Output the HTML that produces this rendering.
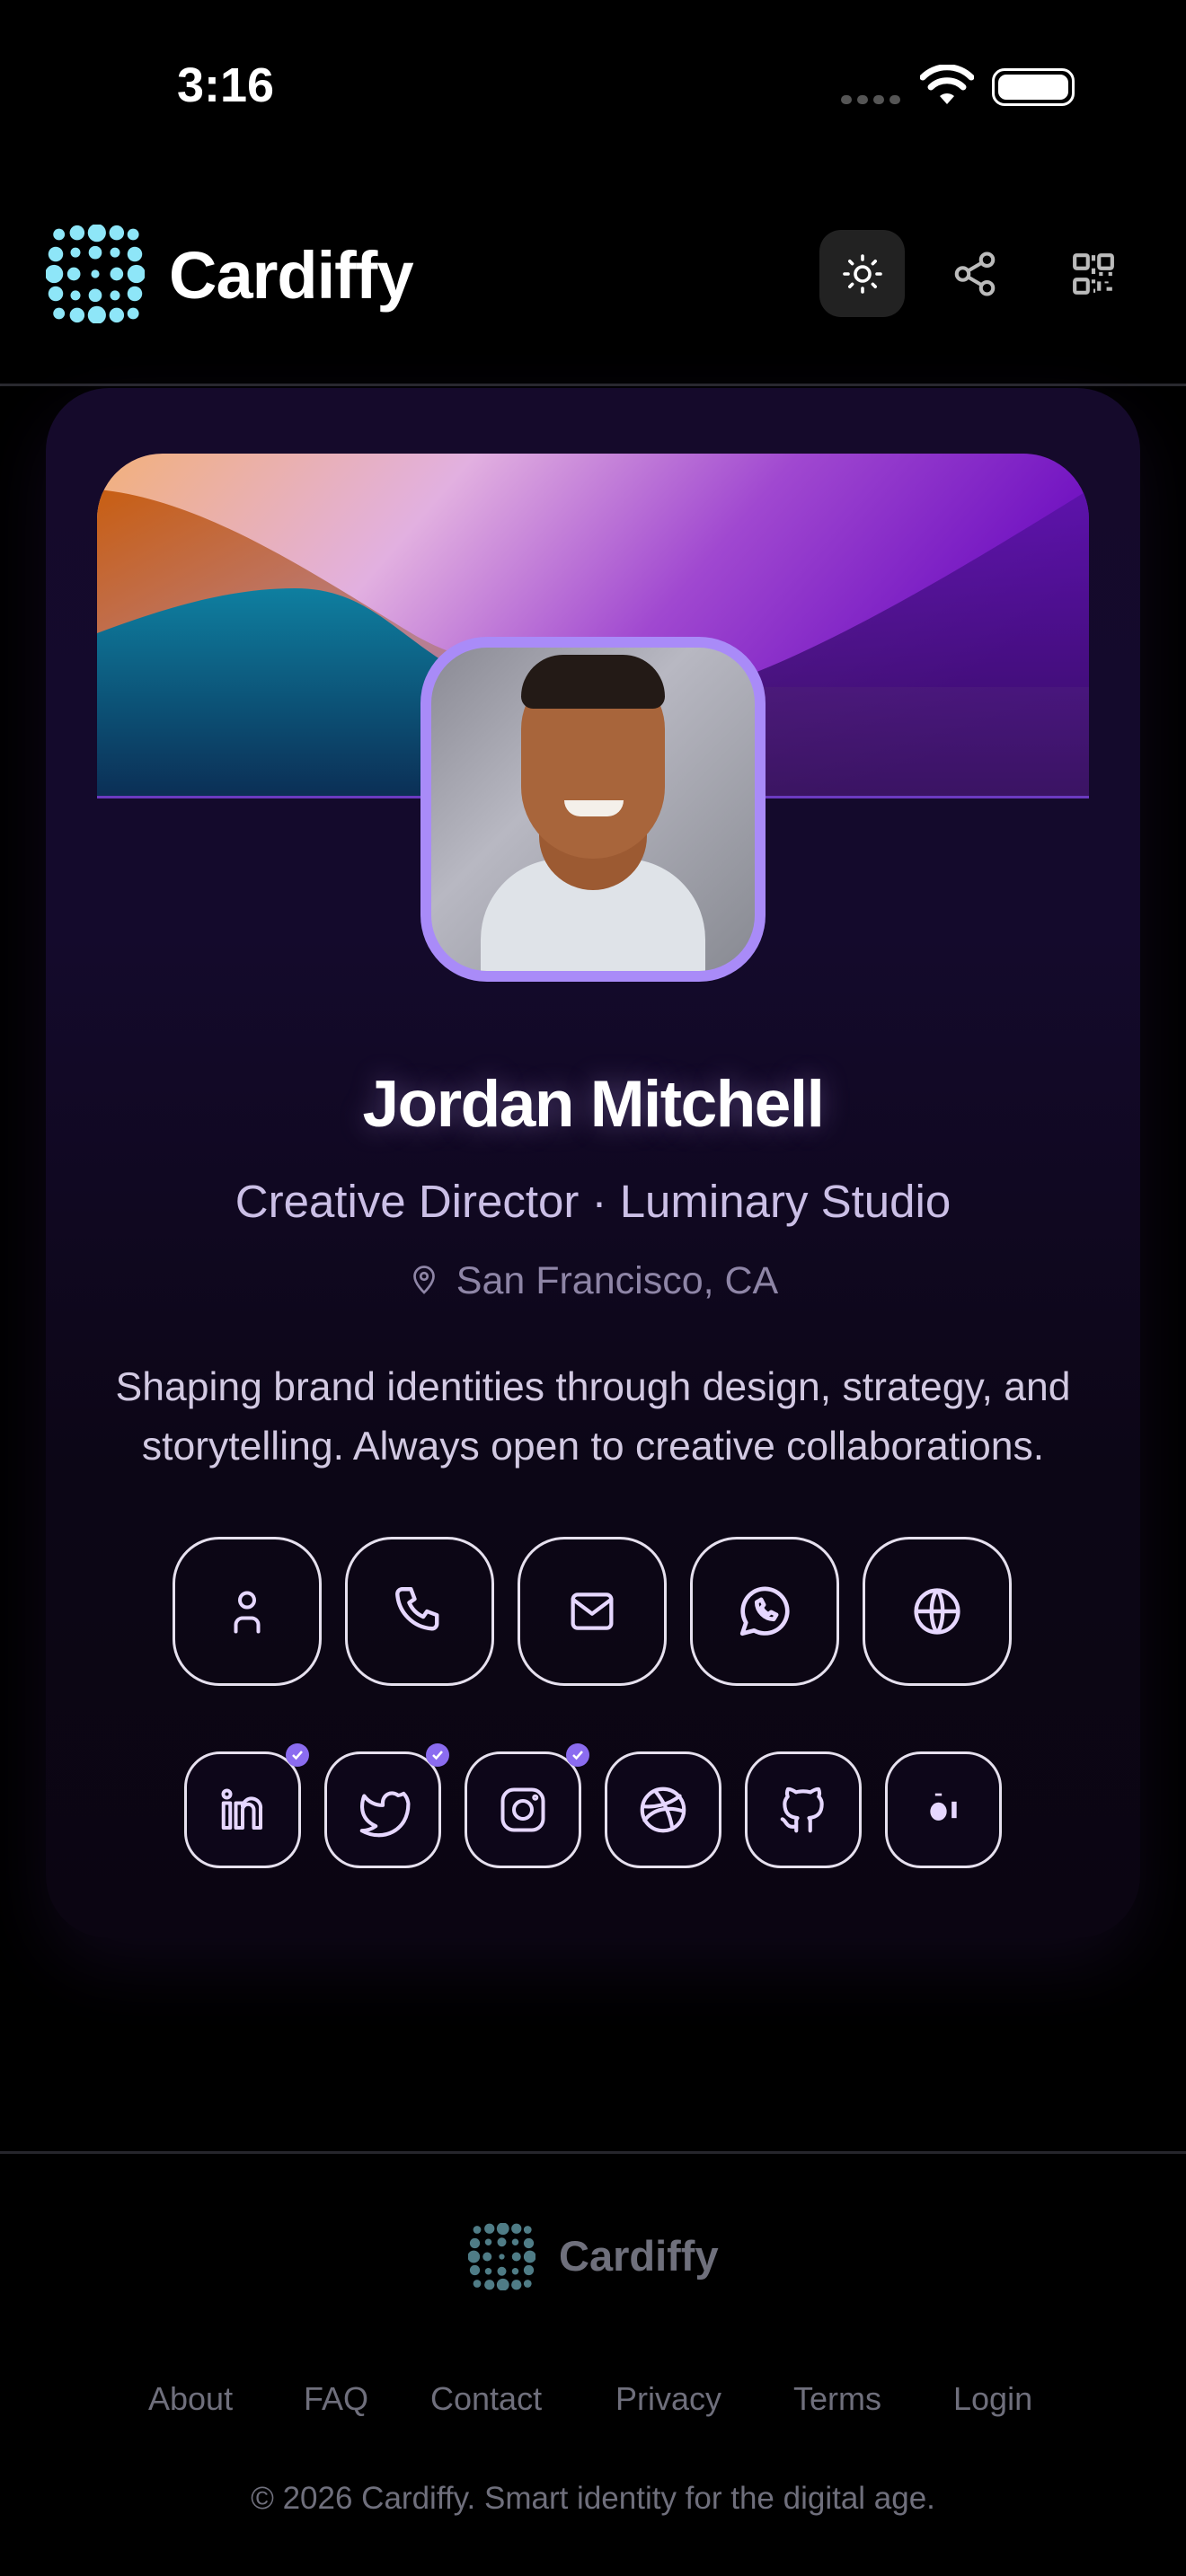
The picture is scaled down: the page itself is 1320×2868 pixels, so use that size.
<!DOCTYPE html>
<html><head><meta charset="utf-8">
<style>
*{margin:0;padding:0;box-sizing:border-box}
body{width:1320px;height:2868px;background:#000;font-family:"Liberation Sans",sans-serif;position:relative;overflow:hidden;color:#fff}
.a{position:absolute}
.ctr{left:0;width:1320px;text-align:center}
.btn{position:absolute;width:166px;height:166px;border:3px solid #e6e0ee;border-radius:52px;display:flex;align-items:center;justify-content:center}
.sb{position:absolute;width:130px;height:130px;border:3px solid #e6e0ee;border-radius:40px;display:flex;align-items:center;justify-content:center;background:#0d0619}
.chk{position:absolute;right:-12px;top:-12px;width:26px;height:26px;border-radius:50%;background:#8b6cf0;display:flex;align-items:center;justify-content:center}
.lk{position:absolute;top:2650px;font-size:36px;color:#6f6f7c}
</style></head><body>
<svg width="0" height="0" style="position:absolute"><defs>
<g id="logo">
<circle cx="8" cy="6" r="3.5"/><circle cx="19" cy="5" r="4.5"/><circle cx="31" cy="5" r="5.5"/><circle cx="43" cy="5" r="4.5"/><circle cx="53" cy="6" r="3.5"/>
<circle cx="6" cy="18" r="4.5"/><circle cx="18" cy="17" r="3"/><circle cx="30" cy="17" r="4"/><circle cx="42" cy="17" r="3"/><circle cx="54" cy="18" r="4.5"/>
<circle cx="5" cy="30" r="5.5"/><circle cx="17" cy="30" r="4"/><circle cx="30" cy="30" r="2.5"/><circle cx="43" cy="30" r="4"/><circle cx="55" cy="30" r="5.5"/>
<circle cx="6" cy="42" r="4.5"/><circle cx="18" cy="43" r="3"/><circle cx="30" cy="43" r="4"/><circle cx="42" cy="43" r="3"/><circle cx="54" cy="42" r="4.5"/>
<circle cx="8" cy="54" r="3.5"/><circle cx="19" cy="55" r="4.5"/><circle cx="31" cy="55" r="5.5"/><circle cx="43" cy="55" r="4.5"/><circle cx="53" cy="54" r="3.5"/>
</g></defs></svg>

<!-- status bar -->
<div class="a" style="left:197px;top:64px;font-size:54px;font-weight:bold">3:16</div>
<div class="a" style="left:936px;top:106px;width:66px;height:10px;display:flex;gap:6px">
<i style="width:12px;height:10px;border-radius:5px;background:#555"></i><i style="width:12px;height:10px;border-radius:5px;background:#555"></i><i style="width:12px;height:10px;border-radius:5px;background:#555"></i><i style="width:12px;height:10px;border-radius:5px;background:#555"></i></div>
<svg class="a" style="left:1024px;top:72px" width="60" height="46" viewBox="0 0 60 46"><path d="M30 44 L22 35 A12 12 0 0 1 38 35 Z" fill="#fff"/><path d="M12 25 A26 26 0 0 1 48 25" stroke="#fff" stroke-width="7" fill="none" stroke-linecap="round"/><path d="M3 14 A38 38 0 0 1 57 14" stroke="#fff" stroke-width="7" fill="none" stroke-linecap="round"/></svg>
<div class="a" style="left:1104px;top:76px;width:92px;height:42px;border:3px solid #fff;border-radius:14px;padding:4px"><div style="width:100%;height:100%;background:#fff;border-radius:9px"></div></div>

<!-- header -->
<svg class="a" style="left:51px;top:250px" width="110" height="110" viewBox="0 0 60 60" fill="#8ee6f8"><use href="#logo"/></svg>
<div class="a" style="left:188px;top:264px;font-size:74px;font-weight:bold;letter-spacing:-1px">Cardiffy</div>
<div class="a" style="left:912px;top:256px;width:95px;height:97px;border-radius:24px;background:#222"></div>
<svg class="a" style="left:936px;top:281px" width="48" height="48" viewBox="0 0 24 24" fill="none" stroke="#fff" stroke-width="1.8" stroke-linecap="round"><circle cx="12" cy="12" r="4"/><path d="M12 2v2M12 20v2M4.9 4.9l1.4 1.4M17.7 17.7l1.4 1.4M2 12h2M20 12h2M4.9 19.1l1.4-1.4M17.7 6.3l1.4-1.4"/></svg>
<svg class="a" style="left:1058px;top:278px" width="54" height="54" viewBox="0 0 24 24" fill="none" stroke="#bbb" stroke-width="1.8"><circle cx="18" cy="5" r="3"/><circle cx="6" cy="12" r="3"/><circle cx="18" cy="19" r="3"/><path d="M8.6 13.5l6.8 4M15.4 6.5l-6.8 4"/></svg>
<svg class="a" style="left:1192px;top:280px" width="50" height="50" viewBox="0 0 24 24" fill="none" stroke="#bbb" stroke-width="2"><rect x="2" y="2" width="7" height="7" rx="1"/><rect x="15" y="2" width="7" height="7" rx="1"/><rect x="2" y="15" width="7" height="7" rx="1"/><path d="M12 2v3M12 9v3M15 12h2M20 12h2M12 15v2M15 16v5M19 16v1M19 20h3M12 21h1"/></svg>
<div class="a" style="left:0;top:427px;width:1320px;height:3px;background:#2a2a30"></div>

<!-- card -->
<div class="a" style="left:51px;top:432px;width:1218px;height:1726px;border-radius:70px;background:linear-gradient(180deg,#150a2b 0%,#140a2c 35%,#0c0616 70%,#0b0512 100%);box-shadow:0 30px 80px rgba(40,20,70,.35)"></div>
<svg class="a" style="left:108px;top:505px" width="1104" height="384" viewBox="0 0 1104 384">
<defs>
<clipPath id="bc"><path d="M0 73 A73 73 0 0 1 73 0 H1031 A73 73 0 0 1 1104 73 V384 H0 Z"/></clipPath>
<linearGradient id="g1" x1="0" y1="0" x2="1" y2="0.3"><stop offset="0" stop-color="#f2b07a"/><stop offset=".35" stop-color="#e2b0e0"/><stop offset=".65" stop-color="#a048d0"/><stop offset="1" stop-color="#6a0bbf"/></linearGradient>
<linearGradient id="g2" x1="0" y1="0" x2="1" y2="0.6"><stop offset="0" stop-color="#c85e12"/><stop offset=".45" stop-color="#b88090"/><stop offset="1" stop-color="#8a40c0"/></linearGradient>
<linearGradient id="g3" x1="0" y1="0" x2="0" y2="1"><stop offset="0" stop-color="#0e7fa0"/><stop offset="1" stop-color="#0b2e55"/></linearGradient>
<linearGradient id="g4" x1="0" y1="0" x2="0" y2="1"><stop offset="0" stop-color="#5a12a8"/><stop offset="1" stop-color="#2c0c52"/></linearGradient>
</defs>
<g clip-path="url(#bc)">
<rect width="1104" height="384" fill="url(#g1)"/>
<path d="M0 40 C120 50 250 140 350 200 C450 260 550 230 650 260 L1104 260 L1104 384 L0 384Z" fill="url(#g2)"/>
<path d="M480 290 C650 300 800 230 1104 40 L1104 384 L480 384Z" fill="url(#g4)" opacity=".85"/>
<path d="M0 200 C80 170 150 150 220 150 C300 150 330 200 400 240 C440 260 460 300 460 384 L0 384Z" fill="url(#g3)"/>
<rect y="381" width="1104" height="3" fill="#6b3ac0"/>
</g></svg>
<!-- avatar -->
<div class="a" style="left:468px;top:709px;width:384px;height:384px;border-radius:74px;background:#a98bf8;padding:12px">
<div style="width:100%;height:100%;border-radius:62px;overflow:hidden;position:relative;background:linear-gradient(135deg,#8a8a94,#b8b8c2 40%,#888a92)">
<div class="a" style="left:55px;top:235px;width:250px;height:150px;border-radius:90px 90px 0 0;background:#dfe3e8"></div>
<div class="a" style="left:120px;top:180px;width:120px;height:90px;background:#9c5a32;border-radius:0 0 60px 60px"></div>
<div class="a" style="left:100px;top:20px;width:160px;height:215px;border-radius:75px 75px 85px 85px;background:#a8653b"></div>
<div class="a" style="left:100px;top:8px;width:160px;height:60px;border-radius:70px 70px 20px 20px;background:#231a16"></div>
<div class="a" style="left:148px;top:170px;width:66px;height:18px;border-radius:0 0 30px 30px;background:#f4f0ea"></div>
</div></div>

<div class="a ctr" style="top:1188px;font-size:73px;font-weight:bold;letter-spacing:-1.5px;text-shadow:0 0 30px rgba(200,170,255,.35)">Jordan Mitchell</div>
<div class="a ctr" style="top:1308px;font-size:51px;color:#cbbfe6">Creative Director · Luminary Studio</div>
<div class="a ctr" style="top:1402px;font-size:43px;color:#8e85a6"><svg width="36" height="40" viewBox="0 0 24 24" fill="none" stroke="#8e85a6" stroke-width="1.8" style="vertical-align:-4px;margin-right:18px"><path d="M12 22s7-6.5 7-12a7 7 0 0 0-14 0c0 5.5 7 12 7 12z"/><circle cx="12" cy="10" r="2.5"/></svg>San Francisco, CA</div>
<div class="a ctr" style="top:1512px;font-size:44.5px;line-height:66px;color:#d2c9e2">Shaping brand identities through design, strategy, and<br>storytelling. Always open to creative collaborations.</div>

<!-- row 1 -->
<div class="btn" style="left:192px;top:1711px"><svg width="60" height="60" viewBox="0 0 24 24" style="fill:none;stroke:#e6d7ff;stroke-width:1.6;stroke-linecap:round;stroke-linejoin:round"><circle cx="12" cy="7" r="3.2"/><path d="M7 21v-3a3 3 0 0 1 3-3h4a3 3 0 0 1 3 3v3"/></svg></div>
<div class="btn" style="left:384px;top:1711px"><svg width="66" height="66" viewBox="0 0 24 24" style="fill:none;stroke:#e6d7ff;stroke-width:1.6;stroke-linecap:round;stroke-linejoin:round"><path d="M5 3h3.5l1.5 4-2.2 1.5a11 11 0 0 0 5.7 5.7L15 12l4 1.5V17a2 2 0 0 1-2 2A15 15 0 0 1 3 5a2 2 0 0 1 2-2z"/></svg></div>
<div class="btn" style="left:576px;top:1711px"><svg width="64" height="64" viewBox="0 0 24 24" style="fill:none;stroke:#e6d7ff;stroke-width:1.6;stroke-linecap:round;stroke-linejoin:round"><rect x="4" y="5" width="16" height="14" rx="2"/><path d="M4 7l8 6 8-6"/></svg></div>
<div class="btn" style="left:768px;top:1711px"><svg width="70" height="70" viewBox="0 0 24 24" style="fill:none;stroke:#e6d7ff;stroke-width:1.6;stroke-linecap:round;stroke-linejoin:round"><path d="M3.5 20.5l1.4-4.2A8.5 8.5 0 1 1 8 19.3z"/><path d="M9 8.5c0 3.5 3 6.5 6.5 6.5l1-1.7-2-1-1 .8a5 5 0 0 1-2.6-2.6l.8-1-1-2z"/></svg></div>
<div class="btn" style="left:960px;top:1711px"><svg width="66" height="66" viewBox="0 0 24 24" style="fill:none;stroke:#e6d7ff;stroke-width:1.6;stroke-linecap:round;stroke-linejoin:round"><circle cx="12" cy="12" r="8.5"/><path d="M3.5 12h17M12 3.5c-3 3-3 14 0 17M12 3.5c3 3 3 14 0 17"/></svg></div>

<!-- row 2 -->
<div class="sb" style="left:205px;top:1950px"><svg width="60" height="60" viewBox="0 0 24 24" style="fill:none;stroke:#e6d7ff;stroke-width:1.6;stroke-linecap:round;stroke-linejoin:round"><circle cx="5" cy="5" r="1.6"/><path d="M3.5 9h3v11h-3zM9 20V9h3v1.5a4 4 0 0 1 8 1V20h-3v-8a1.7 1.7 0 0 0-5 0v8z"/></svg><div class="chk"><svg width="16" height="16" viewBox="0 0 16 16" fill="none" stroke="#fff" stroke-width="2.5"><path d="M3 8l3.5 3.5L13 4"/></svg></div></div>
<div class="sb" style="left:361px;top:1950px"><svg width="62" height="62" viewBox="0 0 24 24" style="fill:none;stroke:#e6d7ff;stroke-width:1.6;stroke-linecap:round;stroke-linejoin:round"><path d="M21 5a8 8 0 0 1-2.4.8A4 4 0 0 0 12 9v1A9.5 9.5 0 0 1 4 6s-4 9 5 13a10.5 10.5 0 0 1-6 2c9 5 20 0 20-11.5 0-.3 0-.6-.1-.8A7 7 0 0 0 21 5z"/></svg><div class="chk"><svg width="16" height="16" viewBox="0 0 16 16" fill="none" stroke="#fff" stroke-width="2.5"><path d="M3 8l3.5 3.5L13 4"/></svg></div></div>
<div class="sb" style="left:517px;top:1950px"><svg width="60" height="60" viewBox="0 0 24 24" style="fill:none;stroke:#e6d7ff;stroke-width:1.6;stroke-linecap:round;stroke-linejoin:round"><rect x="3" y="3" width="18" height="18" rx="5"/><circle cx="12" cy="12" r="4"/><circle cx="17.5" cy="6.5" r=".6"/></svg><div class="chk"><svg width="16" height="16" viewBox="0 0 16 16" fill="none" stroke="#fff" stroke-width="2.5"><path d="M3 8l3.5 3.5L13 4"/></svg></div></div>
<div class="sb" style="left:673px;top:1950px"><svg width="62" height="62" viewBox="0 0 24 24" style="fill:none;stroke:#e6d7ff;stroke-width:1.6;stroke-linecap:round;stroke-linejoin:round"><circle cx="12" cy="12" r="9"/><path d="M8.5 3.7c4 5 6.5 10 7.5 16.5M3.2 10.5c5 .5 11-.5 16-4.5M4 16.5c4-5 10-6 16.5-4"/></svg></div>
<div class="sb" style="left:829px;top:1950px"><svg width="62" height="62" viewBox="0 0 24 24" style="fill:none;stroke:#e6d7ff;stroke-width:1.6;stroke-linecap:round;stroke-linejoin:round"><path d="M9 19c-4.3 1.4-4.3-2.5-6-3m12 5v-3.5c0-1 .1-1.4-.5-2 2.8-.3 5.5-1.4 5.5-6a4.6 4.6 0 0 0-1.3-3.2 4.2 4.2 0 0 0-.1-3.2s-1.1-.3-3.5 1.3a12.3 12.3 0 0 0-6.2 0C6.5 2.8 5.4 3.1 5.4 3.1a4.2 4.2 0 0 0-.1 3.2A4.6 4.6 0 0 0 4 9.5c0 4.6 2.7 5.7 5.5 6-.6.6-.6 1.2-.5 2V21"/></svg></div>
<div class="sb" style="left:985px;top:1950px"><svg width="44" height="44" viewBox="0 0 24 24" fill="#e6d7ff"><rect x="7" y="2" width="4" height="1.5"/><ellipse cx="9" cy="13" rx="5" ry="5.5"/><rect x="17" y="7" width="3" height="10"/></svg></div>

<!-- footer -->
<div class="a" style="left:0;top:2395px;width:1320px;height:3px;background:#26262c"></div>
<svg class="a" style="left:521px;top:2475px" width="75" height="75" viewBox="0 0 60 60" fill="#4f7c86"><use href="#logo"/></svg>
<div class="a" style="left:622px;top:2484px;font-size:47px;font-weight:bold;color:#6f707c">Cardiffy</div>
<div class="lk" style="left:165px">About</div>
<div class="lk" style="left:338px">FAQ</div>
<div class="lk" style="left:479px">Contact</div>
<div class="lk" style="left:685px">Privacy</div>
<div class="lk" style="left:883px">Terms</div>
<div class="lk" style="left:1061px">Login</div>
<div class="a ctr" style="top:2762px;font-size:35px;color:#6f6f7c">© 2026 Cardiffy. Smart identity for the digital age.</div>
</body></html>
